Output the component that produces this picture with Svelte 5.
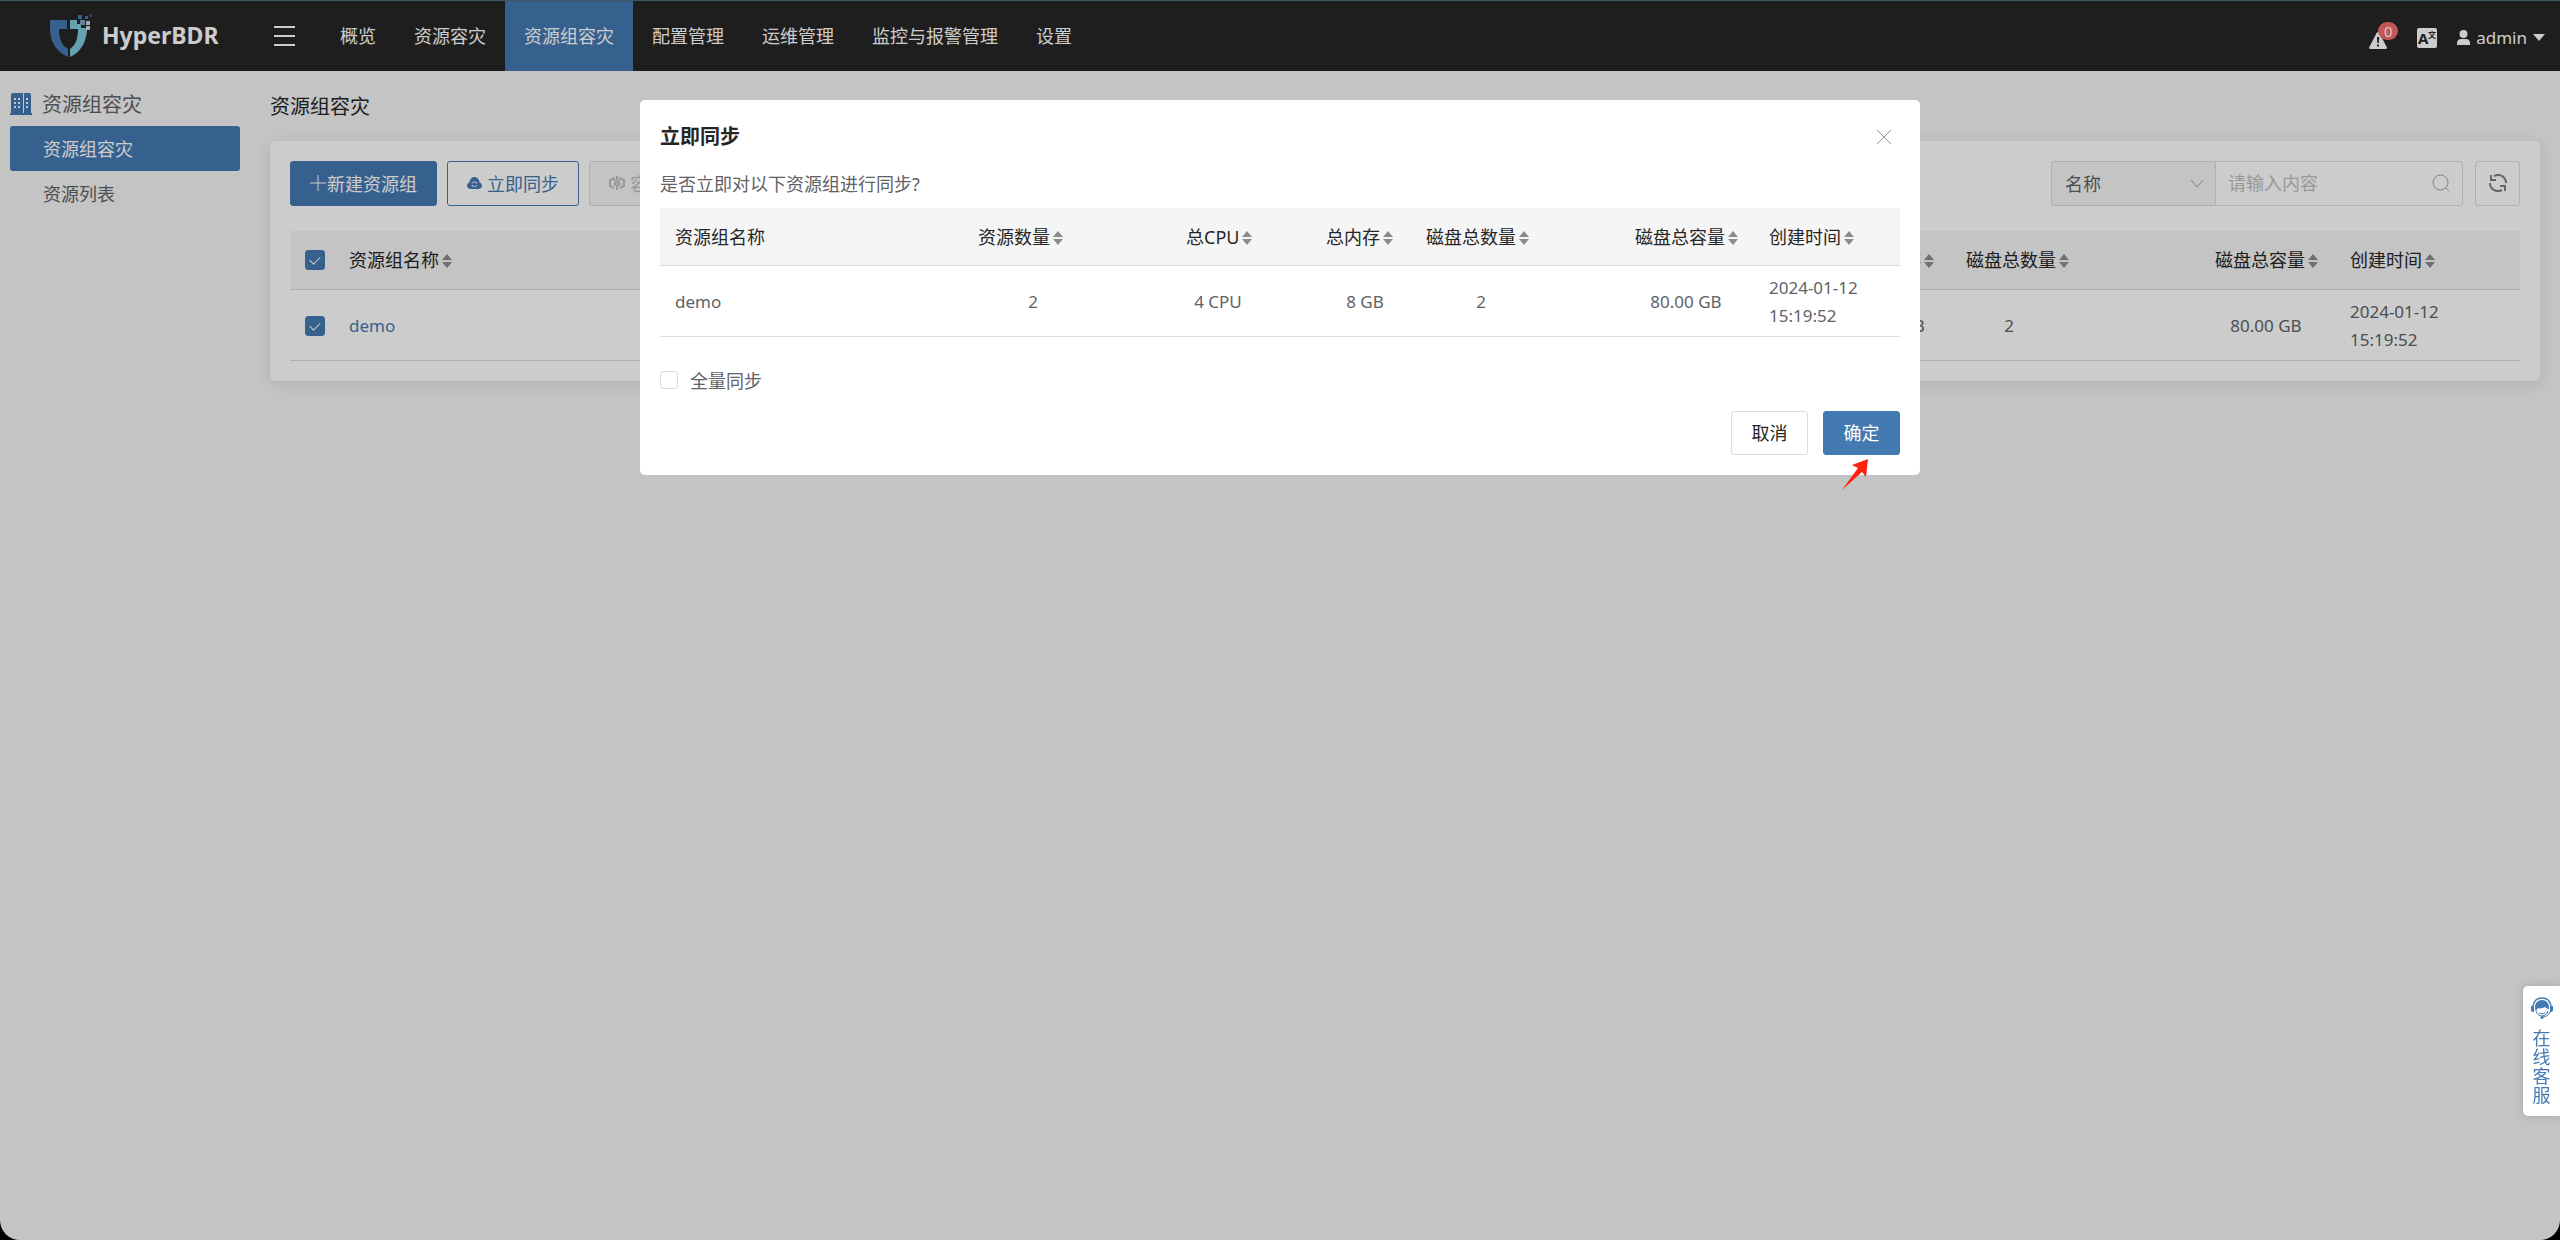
<script lang="ts">
    interface Column {
        key: string;
        label: string;
        width: number;
        box?: number;
        sortable: boolean;
    }

    type Row = Record<string, string>;

    const menu: string[] = [
        "概览",
        "资源容灾",
        "资源组容灾",
        "配置管理",
        "运维管理",
        "监控与报警管理",
        "设置",
    ];
    const side: string[] = ["资源组容灾", "资源列表"];

    // width is a share of the table, box is the width a value is centered in
    const page_columns: Column[] = [
        { key: "name", label: "资源组名称", width: 566, sortable: true },
        { key: "count", label: "资源数量", width: 500, box: 110, sortable: true },
        { key: "cpu", label: "总CPU", width: 452, box: 64, sortable: true },
        { key: "memory", label: "总内存", width: 99, box: 78, sortable: true },
        { key: "disks", label: "磁盘总数量", width: 249, box: 86, sortable: true },
        { key: "capacity", label: "磁盘总容量", width: 135, box: 102, sortable: true },
        { key: "created", label: "创建时间", width: 185, sortable: true },
    ];
    const dialog_columns: Column[] = [
        { key: "name", label: "资源组名称", width: 303, sortable: false },
        { key: "count", label: "资源数量", width: 208, box: 110, sortable: true },
        { key: "cpu", label: "总CPU", width: 140, box: 64, sortable: true },
        { key: "memory", label: "总内存", width: 100, box: 78, sortable: true },
        { key: "disks", label: "磁盘总数量", width: 209, box: 110, sortable: true },
        { key: "capacity", label: "磁盘总容量", width: 134, box: 102, sortable: true },
        { key: "created", label: "创建时间", width: 146, sortable: true },
    ];

    const rows: Row[] = [
        {
            name: "demo",
            count: "2",
            cpu: "4 CPU",
            memory: "8 GB",
            disks: "2",
            capacity: "80.00 GB",
            created: "2024-01-12 15:19:52",
        },
    ];

    const percent = (columns: Column[], width: number, extra: number): string => {
        const total = columns.reduce((sum, c) => sum + c.width, extra);
        return `${(width / total) * 100}%`;
    };

    let active_menu: string = $state("资源组容灾");
    let active_side: string = $state("资源组容灾");
    let checked: boolean[] = $state([true]);
    let full_sync: boolean = $state(false);
    let dialog_open: boolean = $state(true);
    let field: string = $state("name");
    let keyword: string = $state("");

    const toggle_all = () => {
        const next = !checked.every((c) => c);
        checked = checked.map(() => next);
    };
    const close = () => {
        dialog_open = false;
    };
</script>

{#snippet sort()}
    <svg class="sort" viewBox="0 0 10 14" aria-hidden="true">
        <path d="M5 0 10 6H0zM5 14 0 8h10z" />
    </svg>
{/snippet}

{#snippet table(columns: Column[], selectable: boolean)}
    <table>
        <colgroup>
            {#if selectable}
                <col style="width: {percent(columns, 44, 44)}" />
            {/if}
            {#each columns as c}
                <col style="width: {percent(columns, c.width, selectable ? 44 : 0)}" />
            {/each}
        </colgroup>
        <thead>
            <tr>
                {#if selectable}
                    <th>
                        <input
                            type="checkbox"
                            class="tick"
                            aria-label="全选"
                            checked={checked.every((c) => c)}
                            onchange={toggle_all}
                        />
                    </th>
                {/if}
                {#each columns as c}
                    <th>{c.label}{#if c.sortable}{@render sort()}{/if}</th>
                {/each}
            </tr>
        </thead>
        <tbody>
            {#each rows as row, i}
                <tr>
                    {#if selectable}
                        <td>
                            <input
                                type="checkbox"
                                class="tick"
                                aria-label={row.name}
                                bind:checked={checked[i]}
                            />
                        </td>
                    {/if}
                    {#each columns as c}
                        <td>
                            {#if c.box}
                                <span class="value" style="width: {c.box}px">{row[c.key]}</span>
                            {:else if c.key == "created"}
                                <span class="date">{row[c.key]}</span>
                            {:else if selectable}
                                <a href="#detail">{row[c.key]}</a>
                            {:else}
                                {row[c.key]}
                            {/if}
                        </td>
                    {/each}
                </tr>
            {/each}
        </tbody>
    </table>
{/snippet}

<div class="page">
    <header>
        <a class="logo" href="#home">
            <svg viewBox="0 0 42 44" width="42" height="44" aria-hidden="true">
                <path
                    fill="#447ab2"
                    d="M0 6h17v9H9c0 9 2 16 9 20v8C6 38 0 27 0 15z"
                />
                <path
                    fill="#7fcbdc"
                    d="M20 6h7v4h4v4h6v3c-1 11-6 21-17 26v-8c6-4 8-11 8-20h-8z"
                />
                <path fill="#7fa3c4" d="M30 6h5v5h-5z" />
                <path fill="#c5d6e0" d="M36 7h4v4h-4zM36 12h4v4h-4z" />
                <path fill="#447ab2" d="M28 1h4v4h-4zM35 2h3v3h-3z" />
                <path fill="#2c5075" d="M39 0h3v3h-3z" />
            </svg>
            <span>HyperBDR</span>
        </a>
        <button class="burger" aria-label="菜单">
            <i></i><i></i><i></i>
        </button>
        <nav>
            {#each menu as item}
                <a
                    href="#menu"
                    class:active={item == active_menu}
                    onclick={() => (active_menu = item)}>{item}</a
                >
            {/each}
        </nav>
        <div class="tools">
            <button class="alarm" aria-label="报警">
                <svg viewBox="0 0 18 17" width="18" height="17">
                    <path
                        fill="#fff"
                        d="M9 0c.5 0 .9.3 1.200.8l7.500 14.200c.5 1-.1 2-1.200 2h-15C.4 17-.2 16 .3 15L7.800.8C8.100.3 8.500 0 9 0z"
                    />
                    <path fill="#262626" d="M8 5h2.200l-.4 6H8.300zM8 12.500h2v2H8z" />
                </svg>
                <span class="badge">0</span>
            </button>
            <button class="lang" aria-label="语言">
                <svg viewBox="0 0 20 20" width="20" height="20">
                    <rect width="20" height="20" rx="2" fill="#fff" />
                    <text x="1" y="16" class="lang-a">A</text>
                    <text x="11" y="10" class="lang-b">文</text>
                </svg>
            </button>
            <button class="user">
                <svg viewBox="0 0 13 15" width="13" height="15" aria-hidden="true">
                    <circle cx="6.500" cy="4" r="4" fill="#fff" />
                    <path fill="#fff" d="M0 15v-2c0-2.500 2-4 4-4h5c2 0 4 1.500 4 4v2z" />
                </svg>
                admin
                <svg viewBox="0 0 12 7" width="12" height="7" aria-hidden="true">
                    <path fill="#fff" d="M0 0h12L6 7z" />
                </svg>
            </button>
        </div>
    </header>

    <div class="body">
        <aside>
            <h2>
                <svg viewBox="0 0 22 22" width="22" height="22" aria-hidden="true">
                    <path
                        fill="#447ab2"
                        fill-rule="evenodd"
                        d="M1 2Q1 0 3 0h10v20h1V0h5q2 0 2 2v18h1v2H0v-2h1zM4 5v2h2V5zm4 0v2h2V5zm8 0v2h2V5zM4 9v2h2V9zm4 0v2h2V9zm8 0v2h2V9zM4 13v2h2v-2zm4 0v2h2v-2zm8 0v2h2v-2z"
                    />
                </svg>
                资源组容灾
            </h2>
            {#each side as item}
                <a
                    href="#side"
                    class:active={item == active_side}
                    onclick={() => (active_side = item)}>{item}</a
                >
            {/each}
        </aside>

        <main>
            <h1>资源组容灾</h1>
            <section class="card">
                <div class="toolbar">
                    <button class="btn primary create">
                        <svg viewBox="0 0 16 16" width="16" height="16" aria-hidden="true">
                            <path d="M8 0v16M0 8h16" stroke="#fff" fill="none" />
                        </svg>新建资源组
                    </button>
                    <button class="btn plain" onclick={() => (dialog_open = true)}>
                        <svg viewBox="0 0 15 12" width="15" height="12" aria-hidden="true">
                            <path
                                fill="#447ab2"
                                d="M3.500 12C1.500 12 0 10.500 0 8.700 0 7.200 1 6 2.400 5.600 2.600 2.500 4.700 0 7.500 0s4.900 2.500 5.100 5.600C14 6 15 7.200 15 8.700c0 1.800-1.500 3.300-3.500 3.300z"
                            />
                            <path
                                fill="none"
                                stroke="#fff"
                                d="M5 6.500c.3-1.500 3.500-2.500 4.700-.2V5M10 8c-.3 1.500-3.500 2.500-4.700.2V9.500"
                            />
                        </svg>
                        立即同步
                    </button>
                    <button class="btn" disabled>
                        <svg viewBox="0 0 16 14" width="16" height="14" aria-hidden="true">
                            <path
                                fill="none"
                                stroke="#bfbfbf"
                                stroke-width="2"
                                d="M6 2 1 4v6l4 2M10 2l5 2v6l-4 2M8 0v4M5 4l3 2 3-2M5 8l3-2 3 2-3 2-3-2M8 10v4"
                            />
                        </svg>
                        容灾
                    </button>
                    <div class="search">
                        <div class="select">
                            <select aria-label="搜索字段" bind:value={field}>
                                <option value="name">名称</option>
                            </select>
                            <svg viewBox="0 0 14 8" width="14" height="8" aria-hidden="true">
                                <path d="M1 0 7 7l6-7" stroke="#a0a2a6" fill="none" />
                            </svg>
                        </div>
                        <div class="keyword">
                            <input
                                type="text"
                                aria-label="搜索内容"
                                placeholder="请输入内容"
                                bind:value={keyword}
                            />
                            <svg viewBox="0 0 18 18" width="18" height="18" aria-hidden="true">
                                <circle cx="8.500" cy="8.500" r="7.500" />
                                <path d="m14 14 3 3" />
                            </svg>
                        </div>
                    </div>
                    <button class="btn refresh" aria-label="刷新">
                        <svg viewBox="0 0 18 18" width="18" height="18">
                            <path
                                d="M2 1v5h5M5 2c6-3 12 1 12 7M16 17v-5h-5M13 16C7 19 1 15 1 9"
                            />
                        </svg>
                    </button>
                </div>
                {@render table(page_columns, true)}
            </section>
        </main>
    </div>
</div>

{#if dialog_open}
    <div class="mask">
        <div class="dialog" role="dialog" aria-labelledby="dialog-title">
            <div class="dialog-head">
                <h3 id="dialog-title">立即同步</h3>
                <button aria-label="关闭" onclick={close}>
                    <svg viewBox="0 0 16 16" width="16" height="16">
                        <path d="m1 1 14 14M15 1 1 15" />
                    </svg>
                </button>
            </div>
            <p>是否立即对以下资源组进行同步?</p>
            {@render table(dialog_columns, false)}
            <label>
                <input type="checkbox" class="tick" bind:checked={full_sync} />
                全量同步
            </label>
            <div class="dialog-foot">
                <button class="btn" onclick={close}>取消</button>
                <button class="btn primary" onclick={close}>确定</button>
                <svg class="pointer" viewBox="0 0 28 32" aria-hidden="true">
                    <path fill="#ff2010" d="M27 0 25 18l-4-5L1 31 17 9l-6-3z" />
                </svg>
            </div>
        </div>
    </div>
{/if}

<a class="service" href="#service">
    <svg viewBox="0 0 22 22" width="22" height="22" aria-hidden="true">
        <path d="M2 9C3 3 7 1 11 1s8 2 9 8" fill="none" stroke="#447ab2" stroke-width="1.500" />
        <path
            fill="#447ab2"
            d="M4 10c0-4 3-7 7-7s7 3 7 7v2c-2 0-3-1-4-2-2 1-5 2-7 1l-2 3c-1-1-1-2-1-4zM0 9h3v6H2c-1 0-2-1-2-2zM19 9h3v4c0 1-1 2-2 2h-1z"
        />
        <path
            d="M5 14c1 3 3 5 6 5s5-2 6-5M19 15c-1 3-4 5-8 5M8 16c2 1 4 1 6 0"
            fill="none"
            stroke="#447ab2"
        />
        <circle cx="11" cy="20.500" r="1.500" fill="#447ab2" />
    </svg>
    <span>在线客服</span>
</a>

<style>
    :global(body) {
        background: #000;
        font-family: "Noto Sans", "Noto Sans CJK SC", sans-serif;
        font-size: 18px;
        font-weight: 400;
        color: #606266;
    }
    :global(*) {
        box-sizing: border-box;
    }
    h1,
    h2,
    h3,
    p {
        margin: 0;
        font-size: 20px;
        font-weight: 400;
    }
    a {
        color: #447ab2;
        text-decoration: none;
    }
    button,
    input,
    select {
        margin: 0;
        padding: 0;
        border: 0;
        background: none;
        font: inherit;
        color: inherit;
        cursor: pointer;
    }
    svg {
        display: block;
        flex: none;
    }
    .page {
        min-height: 100vh;
        border-radius: 0 0 20px 20px;
        overflow: hidden;
        background: #f5f5f5;
    }

    /* top bar */
    header {
        display: flex;
        height: 71px;
        border-top: 1px solid #516f78;
        background: #262626;
        color: #fff;
    }
    .logo {
        display: flex;
        align-items: center;
        gap: 10px;
        width: 274px;
        padding-left: 50px;
        color: #fff;
        font-size: 23px;
        font-weight: 700;
    }
    .logo span {
        padding-bottom: 2px;
    }
    .burger {
        display: flex;
        flex-direction: column;
        justify-content: center;
        gap: 7px;
        width: 47px;
    }
    .burger i {
        width: 21px;
        height: 2px;
        background: #fff;
    }
    nav {
        display: flex;
        white-space: nowrap;
    }
    nav a {
        padding: 0 19px;
        line-height: 70px;
        color: #fff;
    }
    nav a.active {
        background: #447ab2;
    }
    .tools {
        display: flex;
        align-items: center;
        gap: 20px;
        margin-left: auto;
        padding: 3px 15px 0 0;
    }
    .alarm {
        position: relative;
        padding: 5px 10px 0 0;
    }
    .badge {
        position: absolute;
        top: -5px;
        left: 9px;
        width: 20px;
        height: 18px;
        border-radius: 9px;
        background: #f56c6c;
        font-size: 15px;
        line-height: 18px;
    }
    .lang-a {
        font-size: 15px;
        font-weight: 700;
        fill: #262626;
    }
    .lang-b {
        font-size: 8px;
        font-weight: 700;
        fill: #262626;
    }
    .user {
        display: flex;
        align-items: center;
        gap: 6px;
        font-size: 17px;
    }

    /* side menu */
    .body {
        display: flex;
        padding: 10px 20px 20px 10px;
        gap: 30px;
    }
    aside {
        flex: none;
        width: 230px;
    }
    aside h2 {
        display: flex;
        align-items: center;
        gap: 10px;
        height: 45px;
    }
    aside a {
        display: block;
        padding: 2px 0 0 33px;
        border-radius: 3px;
        line-height: 43px;
        color: #606266;
    }
    aside a.active {
        background: #447ab2;
        color: #fff;
    }
    main {
        flex: 1;
        min-width: 0;
    }
    h1 {
        line-height: 52px;
        margin-bottom: 8px;
        color: #262626;
    }
    .card {
        padding: 20px;
        border-radius: 5px;
        background: #fff;
        box-shadow: 0 3px 15px rgba(0, 0, 0, 0.1);
    }

    /* toolbar */
    .toolbar {
        display: flex;
        gap: 10px;
        margin-bottom: 25px;
    }
    .btn {
        display: flex;
        align-items: center;
        justify-content: center;
        gap: 5px;
        height: 45px;
        padding: 0 19px 2px;
        border: 1px solid #dcdcdc;
        border-radius: 3px;
        color: #262626;
        white-space: nowrap;
    }
    .btn.create {
        gap: 1px;
    }
    .btn.primary {
        border-color: #447ab2;
        background: #447ab2;
        color: #fff;
    }
    .btn.plain {
        border-color: #447ab2;
        color: #447ab2;
    }
    .btn:disabled {
        background: #f5f5f5;
        color: #bfbfbf;
    }
    .search {
        display: flex;
        height: 45px;
        margin: 0 2px 0 auto;
    }
    .select,
    .keyword {
        display: flex;
        align-items: center;
        border: 1px solid #dcdcdc;
    }
    .select {
        width: 164px;
        padding-right: 11px;
        border-right: 0;
        border-radius: 3px 0 0 3px;
        background: #f5f5f5;
    }
    .select select {
        appearance: none;
        flex: 1;
        height: 43px;
        padding-left: 13px;
    }
    .keyword {
        width: 248px;
        padding: 0 12px 2px 0;
        border-radius: 0 3px 3px 0;
    }
    .keyword input {
        flex: 1;
        min-width: 0;
        height: 41px;
        padding-left: 12px;
        outline: none;
    }
    .keyword input::placeholder {
        color: #bfbfbf;
    }
    .keyword svg {
        fill: none;
        stroke: #a0a2a6;
    }
    .refresh {
        width: 45px;
        padding: 0 0 2px;
    }
    .refresh svg {
        fill: none;
        stroke: #808080;
        stroke-width: 2;
    }

    /* tables */
    table {
        width: 100%;
        border-collapse: separate;
        border-spacing: 0;
        table-layout: fixed;
    }
    th,
    td {
        padding: 0 0 0 15px;
        border-bottom: 1px solid #dcdcdc;
        text-align: left;
        font-weight: 400;
        line-height: 28px;
        white-space: nowrap;
    }
    th {
        height: 59px;
        background: #f5f5f5;
        color: #262626;
    }
    td {
        height: 71px;
        padding-top: 1px;
        font-size: 17px;
    }
    .value {
        display: inline-block;
        text-align: center;
    }
    .date {
        display: inline-block;
        width: 100px;
        white-space: normal;
    }
    .sort {
        display: inline-block;
        width: 10px;
        height: 14px;
        margin-left: 3px;
        vertical-align: -1px;
        fill: #8c8c8c;
    }
    .tick {
        appearance: none;
        display: grid;
        place-items: center;
        width: 20px;
        height: 20px;
        border: 1px solid #dcdcdc;
        border-radius: 3px;
    }
    .tick:checked {
        border-color: #447ab2;
        background: #447ab2;
    }
    .tick:checked::after {
        content: "";
        width: 5px;
        height: 9px;
        margin-bottom: 2px;
        border: solid #fff;
        border-width: 0 1px 1px 0;
        transform: rotate(45deg);
    }

    /* dialog */
    .mask {
        position: fixed;
        inset: 0;
        display: flex;
        align-items: flex-start;
        justify-content: center;
        padding-top: 100px;
        background: rgba(0, 0, 0, 0.2);
    }
    .dialog {
        width: 50%;
        padding: 20px;
        border-radius: 5px;
        background: #fff;
    }
    .dialog-head {
        display: flex;
        align-items: flex-end;
        justify-content: space-between;
        height: 32px;
        padding-right: 8px;
    }
    .dialog-head h3 {
        line-height: 30px;
        font-weight: 700;
        color: #262626;
    }
    .dialog-head button {
        padding-bottom: 7px;
    }
    .dialog-head path {
        stroke: #909399;
    }
    .dialog p {
        padding: 17px 0 9px;
        font-size: 18px;
        line-height: 30px;
    }
    .dialog th {
        height: 58px;
    }
    .dialog label {
        display: flex;
        align-items: center;
        gap: 12px;
        height: 26px;
        margin: 30px 0 18px;
    }
    .dialog label .tick {
        width: 18px;
        height: 18px;
    }
    .dialog-foot {
        position: relative;
        display: flex;
        justify-content: flex-end;
        gap: 15px;
    }
    .dialog-foot .btn {
        width: 77px;
        height: 44px;
    }
    .pointer {
        position: absolute;
        top: 48px;
        right: 31px;
        width: 28px;
        height: 32px;
    }

    /* online service tab */
    .service {
        position: fixed;
        right: 0;
        bottom: 124px;
        display: flex;
        flex-direction: column;
        align-items: center;
        gap: 10px;
        width: 37px;
        height: 130px;
        padding-top: 11px;
        border-radius: 5px 0 0 5px;
        background: #fff;
        box-shadow: 0 0 10px rgba(0, 0, 0, 0.15);
    }
    .service span {
        width: 18px;
        line-height: 19px;
        word-break: break-all;
    }
</style>
